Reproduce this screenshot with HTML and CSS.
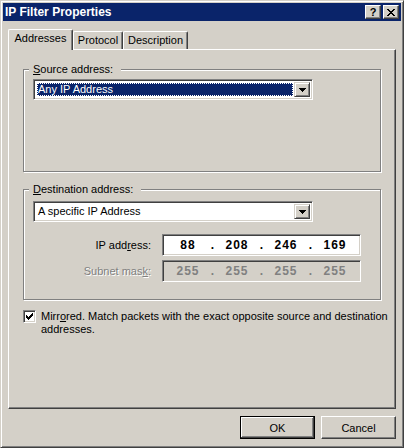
FILE: index.html
```html
<!DOCTYPE html>
<html lang="en">
<head>
    <meta charset="UTF-8">
    <title>IP Filter Properties</title>
    <link rel="stylesheet" href="styles.css">
</head>
<body>
    <div class="window">
        <div class="titlebar">
            <span class="title">IP Filter Properties</span>
            <div class="caption-buttons">
                <span class="cap-btn help">?</span>
                <span class="cap-btn close">
                    <svg width="8" height="7" viewBox="0 0 8 7" shape-rendering="crispEdges">
                        <path d="M0 0h2v1h-2z M6 0h2v1h-2z M1 1h2v1h-2z M5 1h2v1h-2z M2 2h4v1h-4z M3 3h2v1h-2z M2 4h4v1h-4z M1 5h2v1h-2z M5 5h2v1h-2z M0 6h2v1h-2z M6 6h2v1h-2z" fill="#000"/>
                    </svg>
                </span>
            </div>
        </div>

        <div class="client">
            <div class="tabs">
                <div class="tab active">Addresses</div>
                <div class="tab">Protocol</div>
                <div class="tab">Description</div>
            </div>

            <div class="panel">
                <fieldset class="group group-source">
                    <legend><u>S</u>ource address:</legend>
                    <div class="combo">
                        <span class="combo-text selected"><span>Any IP Address</span></span>
                        <span class="combo-btn">
                            <svg width="7" height="4" viewBox="0 0 7 4" shape-rendering="crispEdges">
                                <path d="M0 0h7v1h-1v1h-1v1h-1v1h-1v-1h-1v-1h-1v-1h-1z" fill="#000"/>
                            </svg>
                        </span>
                    </div>
                </fieldset>

                <fieldset class="group group-dest">
                    <legend><u>D</u>estination address:</legend>
                    <div class="combo">
                        <span class="combo-text"><span>A specific IP Address</span></span>
                        <span class="combo-btn">
                            <svg width="7" height="4" viewBox="0 0 7 4" shape-rendering="crispEdges">
                                <path d="M0 0h7v1h-1v1h-1v1h-1v1h-1v-1h-1v-1h-1v-1h-1z" fill="#000"/>
                            </svg>
                        </span>
                    </div>

                    <div class="ip-row">
                        <span class="ip-label">IP add<u>r</u>ess:</span>
                        <div class="ip-field">
                            <span class="octet">88</span><span class="dot">.</span>
                            <span class="octet">208</span><span class="dot">.</span>
                            <span class="octet">246</span><span class="dot">.</span>
                            <span class="octet">169</span>
                        </div>
                    </div>
                    <div class="ip-row disabled">
                        <span class="ip-label">Subnet mas<u>k</u>:</span>
                        <div class="ip-field">
                            <span class="octet">255</span><span class="dot">.</span>
                            <span class="octet">255</span><span class="dot">.</span>
                            <span class="octet">255</span><span class="dot">.</span>
                            <span class="octet">255</span>
                        </div>
                    </div>
                </fieldset>

                <div class="check-row">
                    <span class="checkbox">
                        <svg width="7" height="7" viewBox="0 0 7 7" shape-rendering="crispEdges">
                            <path d="M6 0h1v1h-1z M5 1h2v1h-2z M0 2h1v1h-1z M4 2h3v1h-3z M0 3h2v1h-2z M3 3h3v1h-3z M0 4h5v1h-5z M1 5h3v1h-3z M2 6h1v1h-1z" fill="#000"/>
                        </svg>
                    </span>
                    <span class="check-label">Mirr<u>o</u>red. Match packets with the exact opposite source and destination addresses.</span>
                </div>
            </div>

            <div class="buttons">
                <button class="btn default">OK</button>
                <button class="btn">Cancel</button>
            </div>
        </div>
    </div>
</body>
</html>
```

FILE: styles.css
```css
body {
    margin: 0;
    background-color: #d4d0c8;
}
.window {
    width: 404px;
    height: 448px;
    box-sizing: border-box;
    background-color: #d4d0c8;
    border: 1px solid;
    border-color: #d4d0c8 #404040 #404040 #d4d0c8;
    box-shadow: inset 1px 1px #fff, inset -1px -1px #808080;
    padding: 2px;
    font: 11px "Liberation Sans", Arial, sans-serif;
    color: #000;
}
u {
    text-decoration-thickness: 1px;
    text-underline-offset: 1px;
}

/* title bar */
.titlebar {
    height: 18px;
    display: flex;
    align-items: center;
    justify-content: space-between;
    background-color: #0a246a;
    padding: 0 2px 0 2px;
}
.title {
    color: #fff;
    font-weight: bold;
    font-size: 12px;
}
.caption-buttons {
    display: flex;
    gap: 2px;
}
.cap-btn {
    width: 16px;
    height: 14px;
    box-sizing: border-box;
    display: flex;
    align-items: center;
    justify-content: center;
    background-color: #d4d0c8;
    border: 1px solid;
    border-color: #fff #404040 #404040 #fff;
    box-shadow: inset -1px -1px #808080;
}
.cap-btn.help {
    font-weight: bold;
    font-size: 11px;
    line-height: 12px;
    padding-bottom: 1px;
}

/* tabs */
.client {
    padding: 0 5px;
}
.tabs {
    display: flex;
    align-items: flex-end;
    height: 20px;
    margin-top: 8px;
}
.tab {
    height: 18px;
    box-sizing: border-box;
    padding-top: 2px;
    text-align: center;
    border-left: 1px solid #fff;
    border-top: 1px solid #fff;
    border-right: 1px solid #404040;
    border-radius: 2px 2px 0 0;
    box-shadow: inset -1px 0 #808080;
    line-height: 13px;
}
.tab.active {
    width: 65px;
    height: 21px;
    margin-bottom: -1px;
    position: relative;
    z-index: 1;
    background-color: #d4d0c8;
    padding-top: 2px;
}
.tab:nth-child(2) {
    width: 50px;
}
.tab:nth-child(3) {
    width: 65px;
}

.panel {
    height: 360px;
    box-sizing: border-box;
    border: 1px solid;
    border-color: #fff #404040 #404040 #fff;
    box-shadow: inset -1px -1px #808080;
    padding: 13px 14px 0 14px;
}

/* group boxes */
.group {
    margin: 0;
    padding: 3px 9px 0 9px;
    border: 1px solid #808080;
    box-shadow: inset 1px 1px #fff, 1px 1px #fff;
    min-width: 0;
}
.group legend {
    padding: 0 8px 0 4px;
    margin-left: -4px;
    line-height: 13px;
    background-color: #d4d0c8;
}
.group-source {
    padding-bottom: 71px;
}
.group-dest {
    margin-top: 11px;
    padding-top: 5px;
    padding-bottom: 17px;
}

/* combo box */
.combo {
    width: 280px;
    height: 21px;
    box-sizing: border-box;
    display: flex;
    padding: 2px;
    background-color: #fff;
    border: 1px solid;
    border-color: #808080 #fff #fff #808080;
    box-shadow: inset 1px 1px #404040, inset -1px -1px #d4d0c8;
}
.combo-text {
    flex: 1;
    display: flex;
    padding: 1px;
}
.combo-text span {
    flex: 1;
    padding-left: 1px;
    line-height: 13px;
}
.combo-text.selected span {
    background-color: #0a246a;
    color: #fff;
    outline: 1px dotted #fff;
    outline-offset: -1px;
}
.combo-btn {
    width: 16px;
    box-sizing: border-box;
    display: flex;
    align-items: center;
    justify-content: center;
    background-color: #d4d0c8;
    border: 1px solid;
    border-color: #d4d0c8 #404040 #404040 #d4d0c8;
    box-shadow: inset 1px 1px #fff, inset -1px -1px #808080;
}

/* ip address rows */
.ip-row {
    display: flex;
    align-items: center;
    margin-top: 12px;
}
.ip-row + .ip-row {
    margin-top: 4px;
}
.ip-label {
    width: 118px;
    margin-right: 11px;
    text-align: right;
}
.ip-field {
    width: 199px;
    height: 22px;
    box-sizing: border-box;
    display: grid;
    grid-template-columns: 40px 9px 40px 9px 40px 9px 40px;
    align-items: center;
    padding-left: 5px;
    background-color: #fff;
    border: 1px solid;
    border-color: #808080 #fff #fff #808080;
    box-shadow: inset 1px 1px #404040, inset -1px -1px #d4d0c8;
    font-weight: bold;
    font-size: 12px;
}
.octet {
    text-align: center;
    letter-spacing: 1px;
}
.dot {
    text-align: center;
}
.ip-row.disabled .ip-label {
    color: #808080;
    text-shadow: 1px 1px #fff;
}
.ip-row.disabled .ip-field {
    background-color: #d4d0c8;
    color: #808080;
}

/* checkbox */
.check-row {
    display: flex;
    align-items: flex-start;
    margin-top: 10px;
    margin-right: -12px;
    gap: 5px;
}
.checkbox {
    width: 13px;
    height: 13px;
    flex: none;
    box-sizing: border-box;
    display: flex;
    align-items: center;
    justify-content: center;
    background-color: #fff;
    border: 1px solid;
    border-color: #808080 #fff #fff #808080;
    box-shadow: inset 1px 1px #404040, inset -1px -1px #d4d0c8;
}
.check-label {
    line-height: 13px;
}

/* dialog buttons */
.buttons {
    display: flex;
    justify-content: flex-end;
    gap: 6px;
    margin-top: 7px;
}
.btn {
    width: 75px;
    height: 23px;
    padding: 0;
    font: inherit;
    color: #000;
    background-color: #d4d0c8;
    border: 1px solid;
    border-color: #fff #404040 #404040 #fff;
    box-shadow: inset -1px -1px #808080;
}
.btn.default {
    border-color: #000;
    box-shadow: inset -1px -1px #404040, inset 1px 1px #fff, inset -2px -2px #808080;
}
```
